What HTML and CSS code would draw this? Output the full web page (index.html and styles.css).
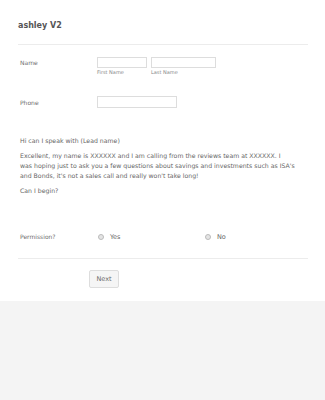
FILE: index.html
```html
<!DOCTYPE html>
<html lang="en">
<head>
  <meta charset="UTF-8">
  <title>ashley V2</title>
  <link rel="stylesheet" href="styles.css">
</head>
<body>

<div class="form-card">
  <div class="form-header">
    <h2>ashley V2</h2>
  </div>

  <div class="form-line name-line">
    <label class="form-label">Name</label>
    <div class="form-input name-fields">
      <span class="sub-field">
        <input type="text" class="first-name">
        <span class="sublabel">First Name</span>
      </span>
      <span class="sub-field">
        <input type="text" class="last-name">
        <span class="sublabel">Last Name</span>
      </span>
    </div>
  </div>

  <div class="form-line phone-line">
    <label class="form-label">Phone</label>
    <div class="form-input">
      <input type="text" class="phone">
    </div>
  </div>

  <div class="form-text">
    <p>Hi can I speak with (Lead name)</p>
    <p>Excellent, my name is XXXXXX and I am calling from the reviews team at XXXXXX. I<br>was hoping just to ask you a few questions about savings and investments such as ISA's<br>and Bonds, it's not a sales call and really won't take long!</p>
    <p>Can I begin?</p>
  </div>

  <div class="form-line radio-line">
    <label class="form-label">Permission?</label>
    <div class="form-input radios">
      <span class="radio-item"><span class="radio"></span>Yes</span>
      <span class="radio-item"><span class="radio"></span>No</span>
    </div>
  </div>

  <div class="form-buttons">
    <button type="button">Next</button>
  </div>
</div>

</body>
</html>
```

FILE: styles.css
```css
body {
  margin: 0;
  background-color: #f4f4f4;
  font-family: "DejaVu Sans", Verdana, sans-serif;
  color: #666;
}
.form-card {
  background-color: #fff;
  padding: 0 17px 12px 18px;
  box-shadow: 0 2px 1px #e4e4e4;
  height: 289px;
}
.form-header {
  padding-top: 20px;
  height: 24px;
  border-bottom: 1px solid #ececec;
}
.form-header h2 {
  margin: 0;
  font-size: 8px;
  font-weight: bold;
  color: #555;
  line-height: 11px;
}
.form-line {
  display: flex;
  padding-left: 2px;
}
.form-label {
  width: 77px;
  font-size: 6px;
  color: #6e6e6e;
}
.name-line {
  margin-top: 12px;
}
.name-line .form-label {
  padding-top: 2px;
}
.name-fields {
  display: flex;
  gap: 4px;
}
.form-input input {
  display: block;
  box-sizing: border-box;
  height: 11px;
  border: 1px solid #ddd;
  margin: 0;
  padding: 0;
}
.first-name {
  width: 50px;
}
.last-name {
  width: 65px;
}
.sublabel {
  display: block;
  font-size: 5px;
  color: #888;
  margin-top: 1px;
}
.phone-line {
  margin-top: 21px;
}
.phone-line .form-label {
  padding-top: 3px;
}
.phone-line .phone {
  width: 80px;
  height: 12px;
}
.form-text {
  padding: 28px 0 0 2px;
  font-size: 6.2px;
  line-height: 10px;
  white-space: nowrap;
}
.form-text p {
  margin: 0 0 5px;
}
.radio-line {
  margin-top: 37px;
  padding-bottom: 17px;
  border-bottom: 1px solid #ececec;
}
.radios {
  display: flex;
  font-size: 6.5px;
  color: #666;
}
.radio-item {
  display: flex;
  align-items: center;
  width: 107px;
}
.radio {
  width: 4px;
  height: 4px;
  border: 1px solid #bbb;
  background-color: #e4e4e4;
  border-radius: 50%;
  margin: 0 6px 0 4px;
}
.form-buttons {
  padding: 7px 0 0 71px;
}
.form-buttons button {
  width: 30px;
  height: 18px;
  padding: 0;
  font-family: inherit;
  font-size: 6.5px;
  color: #666;
  background-color: #f5f5f5;
  border: 1px solid #ddd;
  border-radius: 2px;
}
```
